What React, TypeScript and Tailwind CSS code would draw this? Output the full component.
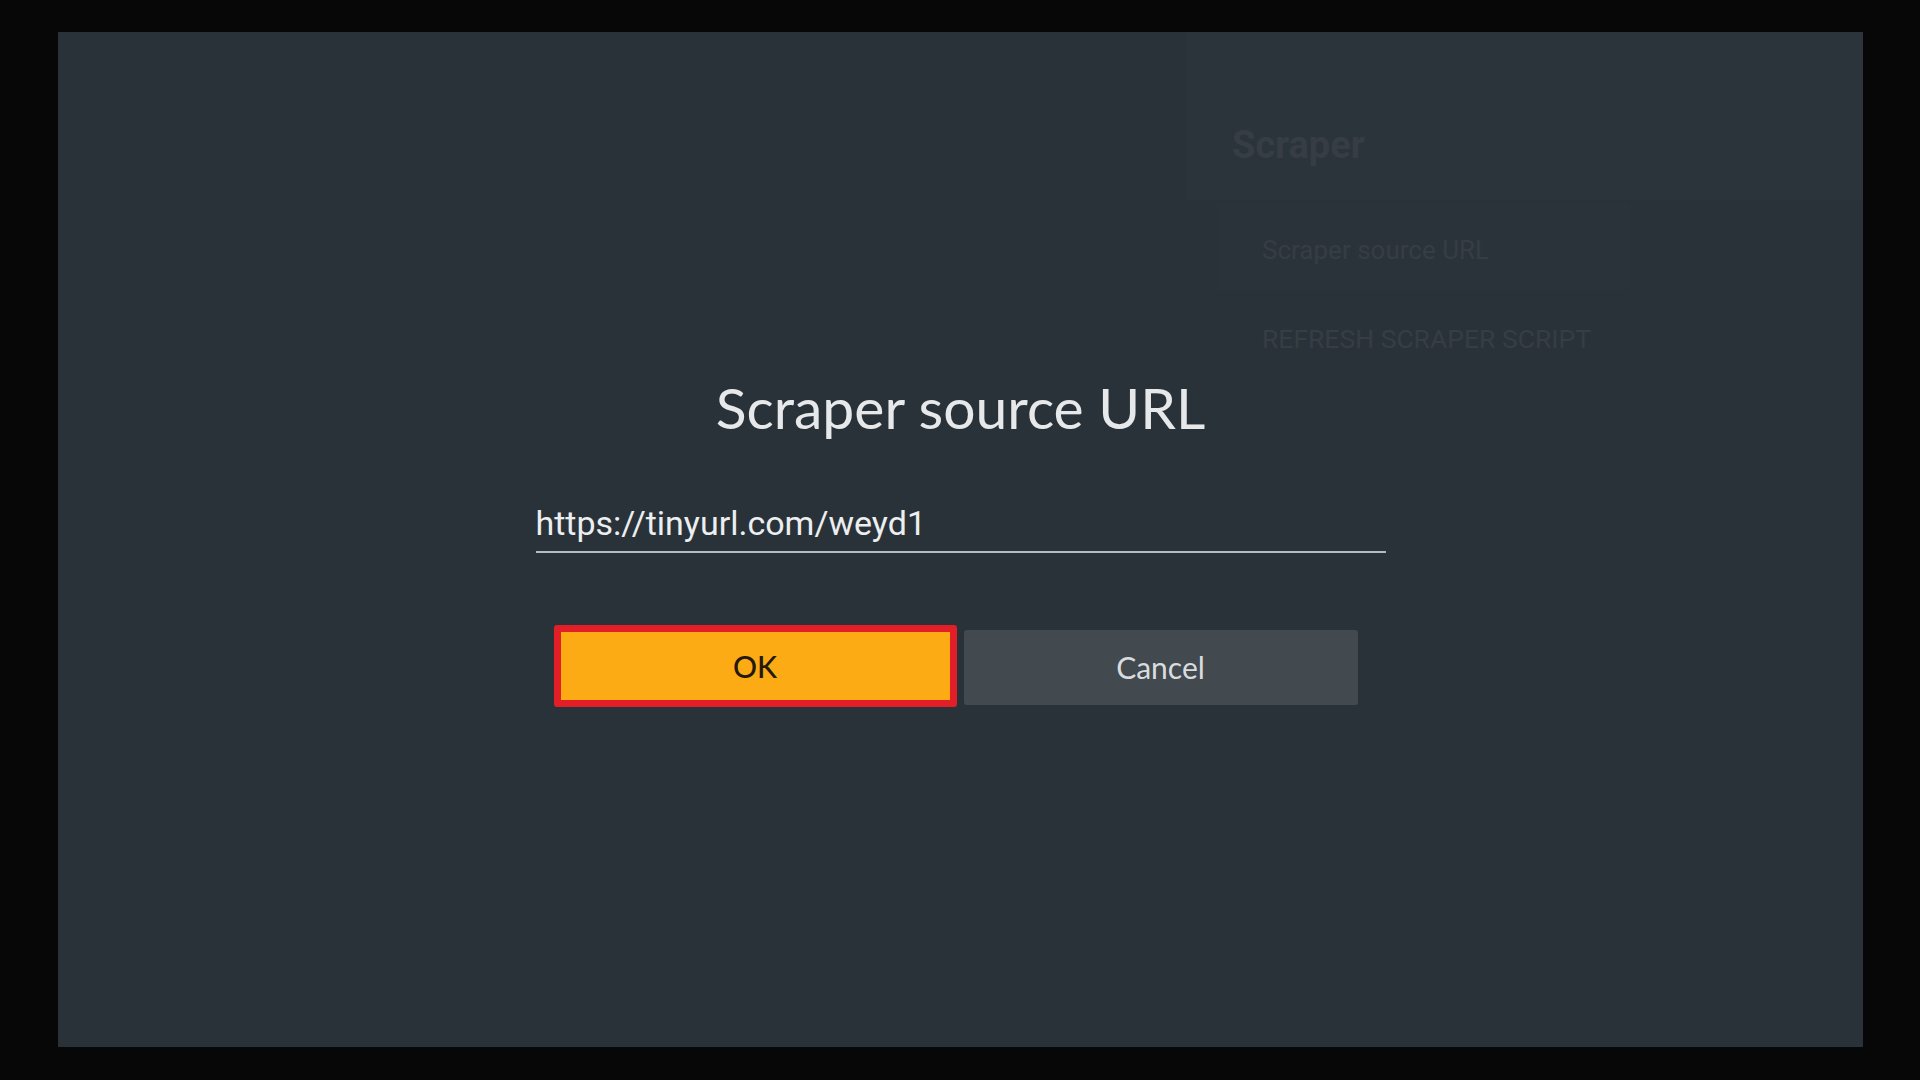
import React from "react";

const lato = { fontFamily: "Lato, 'Open Sans', sans-serif" };

export default function App() {
    return (
        <div className="w-[1920px] h-[1080px] bg-[#070707] pl-[58px] pt-[32px]">
            {/* TV screen */}
            <div className="relative w-[1805px] h-[1015px] bg-[#2a3239] flex overflow-hidden">
                <div className="flex-1" />

                {/* Settings pane behind the dialog */}
                <div className="w-[676px] flex flex-col font-['Roboto',sans-serif]">
                    <div className="h-[168px] bg-[#2c343b] pl-[45px] pt-[94px]">
                        <h2 className="text-[38px] font-bold leading-none text-[#363d44]">Scraper</h2>
                    </div>
                    <div className="ml-[30px] mt-[3px] w-[413px] h-[87px] bg-[#2b333a] pl-[45px] pt-[34px]">
                        <span className="text-[26px] leading-none text-[#363d44]">Scraper source URL</span>
                    </div>
                    <div className="ml-[75px] mt-[36px]">
                        <span className="text-[26.5px] leading-none text-[#363d44]">REFRESH SCRAPER SCRIPT</span>
                    </div>
                </div>

                {/* Dialog */}
                <div className="absolute inset-0 flex justify-center">
                    <div className="w-[850px] mt-[347px] flex flex-col">
                        <h1 style={lato} className="text-center text-[57px] leading-none text-[#e6e8ea]">
                            Scraper source URL
                        </h1>
                        <div className="mt-[70px] pb-[10px] border-b-2 border-[#b4bcc3]">
                            <span className="font-['Roboto',sans-serif] text-[34px] leading-none text-[#eceef0]">
                                https://tinyurl.com/weyd1
                            </span>
                        </div>
                        <div className="mt-[72px] pl-[18px] flex items-start gap-[7px]">
                            <button
                                style={lato}
                                className="w-[403px] h-[82px] bg-[#fcab14] border-[7px] border-[#e21f26] rounded-[3px] text-[30px] font-medium text-[#24190a]"
                            >
                                OK
                            </button>
                            <button
                                style={lato}
                                className="mt-[5px] w-[394px] h-[75px] bg-[#42494f] rounded-[3px] text-[30px] text-[#d9dcde]"
                            >
                                Cancel
                            </button>
                        </div>
                    </div>
                </div>
            </div>
        </div>
    );
}
